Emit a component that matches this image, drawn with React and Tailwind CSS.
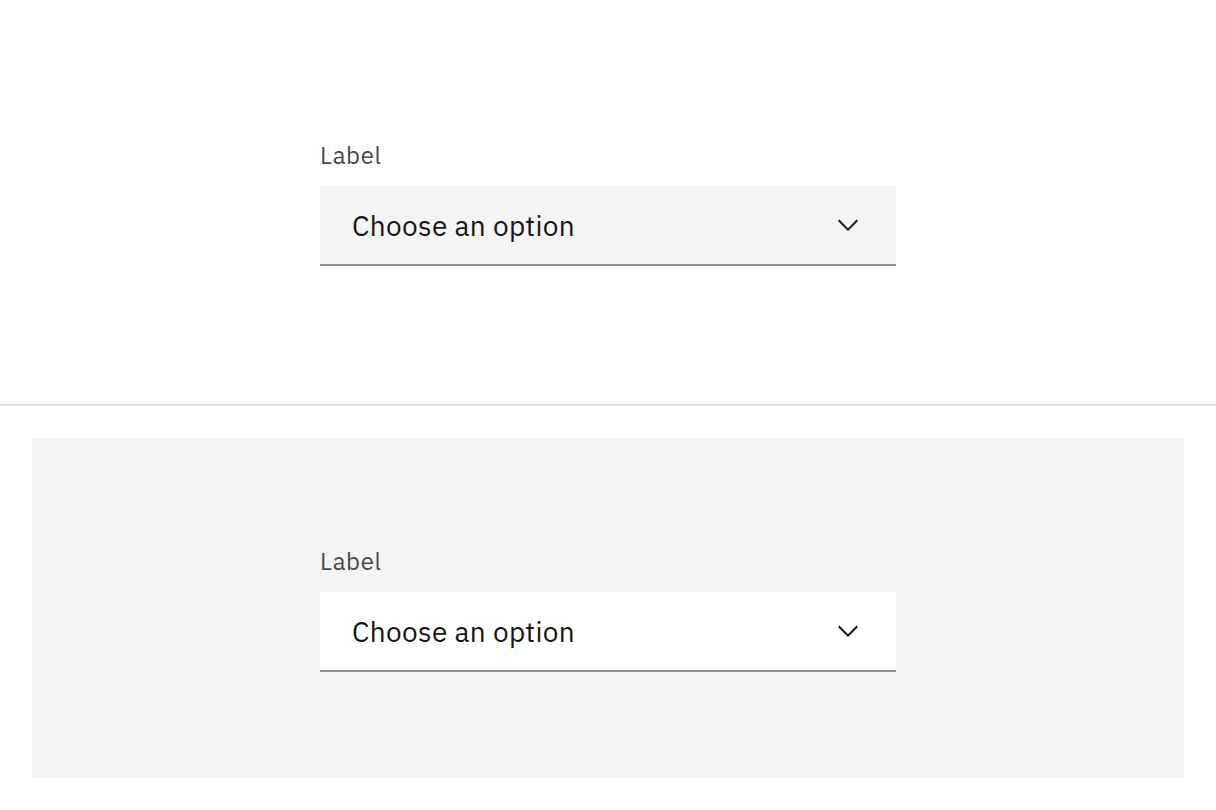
import { useState } from 'react';

const font = { fontFamily: '"IBM Plex Sans", Roboto, "Noto Sans", sans-serif' };

const ChevronDown = () => (
  <svg width="32" height="32" viewBox="0 0 16 16" fill="#161616" aria-hidden="true">
    <path d="M8 11L3 6 3.7 5.3 8 9.6 12.3 5.3 13 6z" />
  </svg>
);

const Dropdown = ({ light }) => {
  const [value] = useState('Choose an option');

  return (
    <div className="w-[576px]">
      <label className="block h-[32px] mb-[16px] text-[24px] leading-[34px] tracking-[0.64px] text-[#4a4a4a]">
        Label
      </label>
      <button
        className={`flex items-center justify-between w-full h-[80px] pl-[32px] pr-[32px] border-b-2 border-[#8d8d8d] text-left ${
          light ? 'bg-white' : 'bg-[#f4f4f4]'
        }`}
      >
        <span className="h-[36px] text-[28px] leading-[38px] tracking-[0.32px] text-[#161616]">{value}</span>
        <ChevronDown />
      </button>
    </div>
  );
};

export default function App() {
  return (
    <div className="w-full bg-white" style={font}>
      {/* Default */}
      <div className="h-[406px] border-b-2 border-[#e0e0e0] flex items-center pl-[320px]">
        <Dropdown />
      </div>

      {/* On layer */}
      <div className="px-[32px] py-[32px]">
        <div className="h-[340px] bg-[#f4f4f4] flex items-center pl-[288px]">
          <Dropdown light />
        </div>
      </div>
    </div>
  );
}
